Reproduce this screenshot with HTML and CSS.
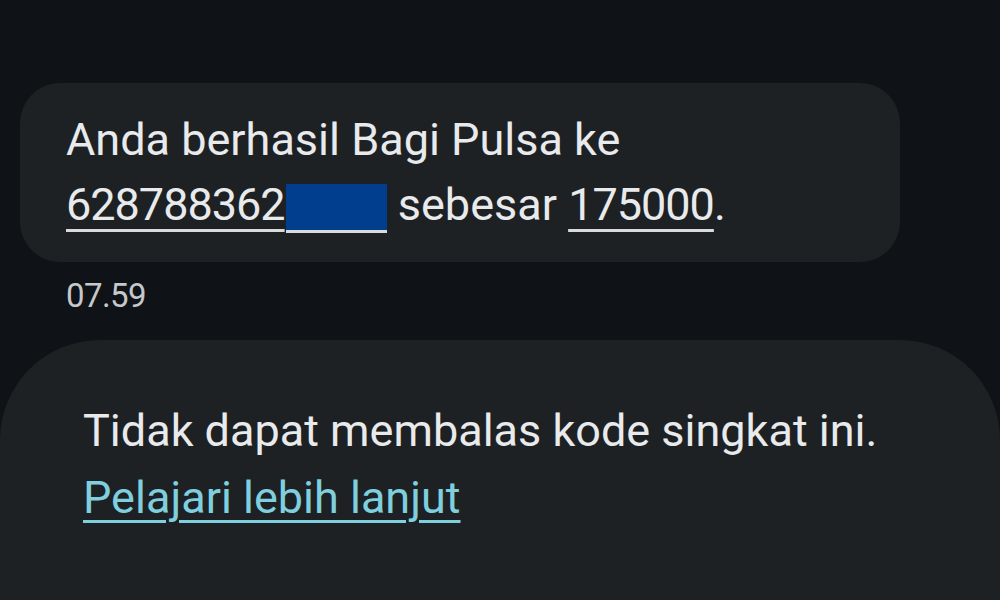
FILE: index.html
```html
<!DOCTYPE html>
<html lang="id">
<head>
<meta charset="utf-8">
<link rel="stylesheet" href="styles.css">
</head>
<body>
<main class="thread">
  <div class="msg">
    <div class="bubble">
      <p class="text">Anda berhasil Bagi Pulsa ke<br><span class="num">628788362</span><span class="redact"></span> sebesar <span class="num">175000</span>.</p>
    </div>
    <div class="time">07.59</div>
  </div>
  <div class="notice">
    <p class="notice-text">Tidak dapat membalas kode singkat ini.</p>
    <a class="learn" href="#">Pelajari lebih lanjut</a>
  </div>
</main>
</body>
</html>
```
FILE: styles.css
```css
html, body {
  margin: 0;
  padding: 0;
  background: #0f1216;
  height: 100%;
  overflow: hidden;
}
body {
  font-family: Roboto, "Noto Sans", sans-serif;
  color: #e8eaec;
}
.thread {
  display: flex;
  flex-direction: column;
  height: 100%;
  box-sizing: border-box;
  padding-top: 83px;
}
.msg {
  display: flex;
  flex-direction: column;
  padding-left: 20px;
}
.bubble {
  width: 880px;
  height: 179px;
  box-sizing: border-box;
  background: #1e2124;
  border-radius: 40px;
  padding: 24px 0 0 46px;
}
.text {
  margin: 0;
  font-size: 45px;
  line-height: 65px;
}
.num {
  letter-spacing: -1px;
  text-decoration: underline;
  text-decoration-thickness: 3px;
  text-underline-offset: 9px;
  text-decoration-color: #d8dadc;
}
.redact {
  display: inline-block;
  width: 101px;
  height: 46px;
  background: #013e8e;
  vertical-align: -10px;
  margin-left: 1px;
  box-shadow: 0 3px 0 #d8dadc;
}
.time {
  margin: 16px 0 0 46px;
  font-size: 33px;
  line-height: 36px;
  color: #c6c8ca;
  letter-spacing: -0.6px;
}
.notice {
  flex: 1;
  margin-top: 26px;
  background: #1e2124;
  border-radius: 100px 100px 0 0;
  padding: 57px 0 0 83px;
}
.notice-text {
  margin: 0;
  font-size: 45px;
  line-height: 67px;
}
.learn {
  display: inline-block;
  font-size: 45px;
  line-height: 67px;
  color: #7fcfdf;
  text-decoration: underline;
  text-decoration-thickness: 3px;
  text-underline-offset: 7px;
}
```
